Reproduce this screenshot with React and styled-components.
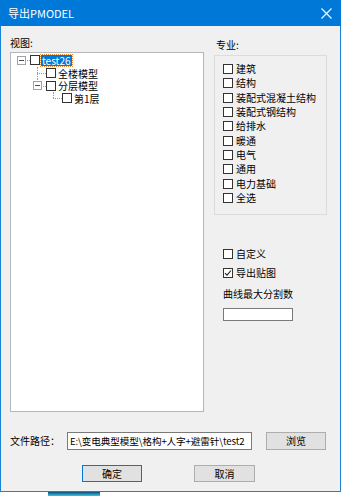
import React from 'react'
import styled, { createGlobalStyle } from 'styled-components'

const GlobalStyle = createGlobalStyle`
    html, body {
        margin: 0;
        padding: 0;
        background: #ffffff;
    }
    body {
        font-family: "Noto Sans CJK SC", "Liberation Sans", sans-serif;
        font-size: 10px;
        line-height: 12px;
        color: #000;
    }
`

const Dialog = styled.div`
    width: 341px;
    height: 492px;
    box-sizing: border-box;
    display: flex;
    flex-direction: column;
    background: #f0f0f0;
    border: 1px solid #1a82d6;
    border-top: none;
`

const TitleBar = styled.div`
    height: 26px;
    flex: none;
    margin: 0 -1px;
    background: #0078d7;
    color: #fff;
    display: flex;
    align-items: center;
    justify-content: space-between;
    padding: 0 9px 0 8px;
    font-size: 11px;
`

const Body = styled.div`
    flex: 1;
    display: flex;
    flex-direction: column;
    padding: 10px 0 0 9px;
`

const Main = styled.div`
    display: flex;
    gap: 10px;
`

const LeftCol = styled.div`
    width: 194px;
    display: flex;
    flex-direction: column;
`

const RightCol = styled.div`
    width: 113px;
    display: flex;
    flex-direction: column;
    padding-top: 2px;
`

const Label = styled.div`
    height: 14px;
    line-height: 14px;
    margin-bottom: ${p => p.$mb || 0}px;
    padding-left: ${p => p.$pl || 0}px;
`

const TreeBox = styled.div`
    height: 360px;
    box-sizing: border-box;
    background: #fff;
    border: 1px solid #b6b6bd;
    padding-top: 1px;
`

const TreeRow = styled.div`
    height: 12.7px;
    display: flex;
    align-items: center;
    padding-left: ${p => 2 + p.$level * 16}px;
`

const Gutter = styled.span`
    position: relative;
    width: 16px;
    height: 100%;
    flex: none;
    display: flex;
    align-items: center;
    justify-content: center;
    &::before {
        content: '';
        display: ${p => (p.$vert ? 'block' : 'none')};
        position: absolute;
        left: 8px;
        top: 0;
        height: ${p => (p.$vert === 'full' ? '100%' : '50%')};
        border-left: 1px dotted #9a9a9a;
    }
    &::after {
        content: '';
        display: ${p => (p.$horiz ? 'block' : 'none')};
        position: absolute;
        left: 8px;
        right: -1px;
        top: 50%;
        border-top: 1px dotted #9a9a9a;
    }
`

const Expander = styled.span`
    position: relative;
    z-index: 1;
    width: 7px;
    height: 7px;
    margin-left: 1px;
    border: 1px solid #a2a2a8;
    background: #fff;
    display: flex;
    align-items: center;
    justify-content: center;
    &::after {
        content: '';
        width: 5px;
        border-top: 1px solid #4d4d4d;
    }
`

const Box = styled.span`
    width: 10px;
    height: 10px;
    box-sizing: border-box;
    flex: none;
    border: 1px solid #333;
    background: #fff;
    margin-left: ${p => p.$ml || 0}px;
    display: flex;
    align-items: center;
    justify-content: center;
`

const NodeText = styled.span`
    display: inline-block;
    height: 11px;
    margin-left: 1px;
    padding: 0 1px;
    line-height: 11px;
    white-space: nowrap;
    background: ${p => (p.$selected ? '#0078d7' : 'transparent')};
    color: ${p => (p.$selected ? '#fff' : '#000')};
    outline: ${p => (p.$selected ? '1px dotted #e08a3a' : 'none')};
`

const Group = styled.div`
    height: 160px;
    box-sizing: border-box;
    border: 1px solid #dcdcdc;
    padding: 6px 0 0 8px;
    margin-top: 3px;
`

const CheckRow = styled.label`
    height: ${p => p.$h || 14.3}px;
    display: flex;
    align-items: center;
    gap: 3px;
    white-space: nowrap;
`

const Options = styled.div`
    display: flex;
    flex-direction: column;
    padding: 32px 0 0 9px;
`

const SmallInput = styled.div`
    width: 70px;
    height: 13px;
    box-sizing: border-box;
    margin-top: 7px;
    background: #fff;
    border: 1px solid #7a7a7a;
`

const PathRow = styled.div`
    display: flex;
    align-items: center;
    margin-top: 20px;
    height: 18px;
`

const PathInput = styled.div`
    width: 185px;
    height: 18px;
    box-sizing: border-box;
    margin-left: 7px;
    padding-left: 2px;
    background: #fff;
    border: 1px solid #7a7a7a;
    line-height: 16px;
    font-size: 9.6px;
    letter-spacing: -0.1px;
    white-space: nowrap;
    overflow: hidden;
`

const Button = styled.div`
    width: ${p => p.$w || 60}px;
    height: ${p => p.$h || 17}px;
    box-sizing: border-box;
    margin-left: ${p => p.$ml || 0}px;
    background: #e1e1e1;
    border: 1px solid ${p => (p.$primary ? '#0078d7' : '#adadad')};
    display: flex;
    align-items: center;
    justify-content: center;
`

const ButtonRow = styled.div`
    display: flex;
    margin-top: 15px;
    padding-left: 72px;
`

const Desktop = styled.div`
    width: 52px;
    height: 4px;
    margin-left: 48px;
    background: linear-gradient(180deg, #0d4f7a 0%, #36c6e8 100%);
`

function Check({ checked, ml }) {
    return (
        <Box $ml={ml}>
            {checked ? (
                <svg width="8" height="8" viewBox="0 0 8 8">
                    <path d="M1 4.2 L3 6.2 L7 1.5" fill="none" stroke="#222" strokeWidth="1.1" />
                </svg>
            ) : null}
        </Box>
    )
}

const majors = ['建筑', '结构', '装配式混凝土结构', '装配式钢结构', '给排水', '暖通', '电气', '通用', '电力基础', '全选']

function App() {
    return (
        <>
            <GlobalStyle />
            <Dialog>
                <TitleBar>
                    <span>导出PMODEL</span>
                    <svg width="11" height="11" viewBox="0 0 11 11">
                        <path d="M0.5 0.5 L10.5 10.5 M10.5 0.5 L0.5 10.5" stroke="#fff" strokeWidth="1.1" />
                    </svg>
                </TitleBar>
                <Body>
                    <Main>
                        <LeftCol>
                            <Label $mb={2}>视图:</Label>
                            <TreeBox>
                                <TreeRow $level={0}>
                                    <Gutter $horiz><Expander /></Gutter>
                                    <Check ml={1} />
                                    <NodeText $selected>test26</NodeText>
                                </TreeRow>
                                <TreeRow $level={1}>
                                    <Gutter $vert="full" $horiz />
                                    <Check ml={1} />
                                    <NodeText>全楼模型</NodeText>
                                </TreeRow>
                                <TreeRow $level={1}>
                                    <Gutter $vert="half" $horiz><Expander /></Gutter>
                                    <Check ml={1} />
                                    <NodeText>分层模型</NodeText>
                                </TreeRow>
                                <TreeRow $level={2}>
                                    <Gutter $vert="half" $horiz />
                                    <Check ml={1} />
                                    <NodeText>第1层</NodeText>
                                </TreeRow>
                            </TreeBox>
                        </LeftCol>
                        <RightCol>
                            <Label $pl={2}>专业:</Label>
                            <Group>
                                {majors.map(m => (
                                    <CheckRow key={m}>
                                        <Check />
                                        <span>{m}</span>
                                    </CheckRow>
                                ))}
                            </Group>
                            <Options>
                                <CheckRow $h={14}>
                                    <Check />
                                    <span>自定义</span>
                                </CheckRow>
                                <CheckRow $h={14} style={{ marginTop: 5 }}>
                                    <Check checked />
                                    <span>导出贴图</span>
                                </CheckRow>
                                <CheckRow $h={14} style={{ marginTop: 7 }}>
                                    <span>曲线最大分割数</span>
                                </CheckRow>
                                <SmallInput />
                            </Options>
                        </RightCol>
                    </Main>
                    <PathRow>
                        <span>文件路径：</span>
                        <PathInput>E:\变电典型模型\格构+人字+避雷针\test2</PathInput>
                        <Button $ml={14} $h={18}>浏览</Button>
                    </PathRow>
                    <ButtonRow>
                        <Button $primary>确定</Button>
                        <Button $ml={52} $w={61}>取消</Button>
                    </ButtonRow>
                </Body>
            </Dialog>
            <Desktop />
        </>
    )
}

export default App
